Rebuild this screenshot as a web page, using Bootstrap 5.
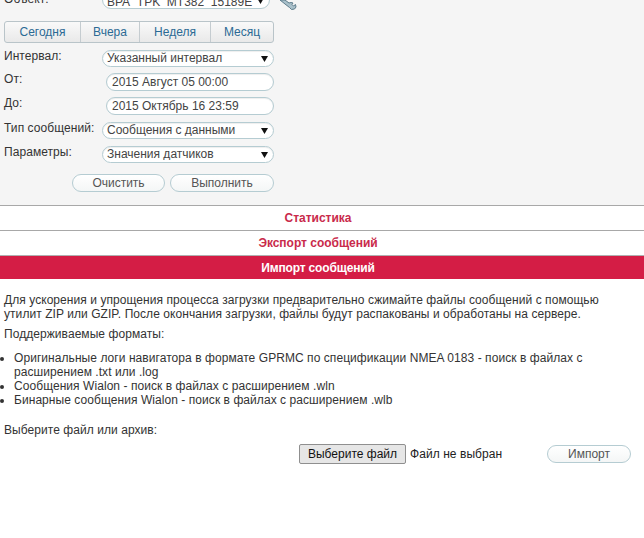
<!DOCTYPE html>
<html lang="ru">
<head>
<meta charset="utf-8">
<title>Импорт сообщений</title>
<link href="https://cdn.jsdelivr.net/npm/bootstrap@5.3.0/dist/css/bootstrap.min.css" rel="stylesheet">
<style>
html,body{height:538px;overflow:hidden}
body{font:12px/14px "Liberation Sans",Arial,sans-serif;color:#333;background:#fff;letter-spacing:.06px}
.query-panel{background:#f5f5f5;margin-top:-12px;height:217px;padding:0 370px 0 4px;width:644px}
.field-row{display:flex;align-items:flex-start;height:24px}
.field-label{width:98px;flex:none;margin-top:-1px}
.label-high{margin-top:-2px}
.pill-select.form-select,.pill-input.form-control{font-size:12px;line-height:14px;color:#444;border:1px solid #b5ccd2;box-shadow:inset 0 1px 1px #eee;padding:0 16px 0 4px;background-color:#fff}
.pill-select.form-select{width:172px;height:17px;min-height:17px;padding-bottom:2px;border-radius:9px;background-position:right 5px center;background-size:7px 7px;background-image:url("data:image/svg+xml,%3Csvg xmlns='http://www.w3.org/2000/svg' viewBox='0 0 8 8'%3E%3Cpath d='M0 1h8L4 8z' fill='%23111'/%3E%3C/svg%3E")}
.pill-input.form-control{width:168px;height:18px;min-height:18px;border-radius:9px;margin:-1px 0 0 4px;padding-left:5px}
.object-row{height:21px}
.object-row .field-label{margin-top:4px}
.object-row .pill-select.form-select{margin-top:3px;height:18px;min-height:18px;padding-top:3px;padding-bottom:0}
.wrench{margin:12px 0 0 10px;flex:none}
.range-group{display:flex;width:270px;height:22px;margin:12px 0 7px;border:1px solid #b9c4c9;border-radius:3px;background:linear-gradient(#f9f9f9,#e9e9e9)}
.range-group .btn{height:20px;padding:0;font-size:12px;line-height:20px;color:#2b6a94;border:0;border-right:1px solid #c5ccd0;border-radius:0;background:transparent}
.range-group .btn:last-child{border-right:0}
.seg-a{width:76px}.seg-b{width:59px}.seg-c{width:71px}.seg-d{width:62px}
.pill-btn.btn{height:18px;padding:0;font-size:12px;line-height:16px;color:#555;background:linear-gradient(#fff,#f4f6f6);border:1px solid #b5ccd2;border-radius:9px}
.action-row{display:flex;justify-content:flex-end;gap:5px;margin-top:0;width:270px}
.clear-btn{width:93px}.run-btn{width:104px}.import-btn{width:84px}
.section-bar{height:25px;border-top:1px solid #a8a8a8;text-align:center;font-weight:700;font-size:12px;line-height:25px;color:#c92a4b;background:#fff;padding-right:8px;letter-spacing:-.02px}
.section-bar.active-bar{height:24px;background:#d41d45;color:#fff;line-height:24px;border-top-color:#b0b0b0;letter-spacing:-.15px}
.import-body{padding:14px 4px 0}
.import-body p{margin:0 0 6px;color:#333}
.lead-text{width:600px}
.import-body ul{margin:10px 0 0;padding-left:10px;width:610px}
.pick-label{margin-top:16px}
.pick-row{display:flex;align-items:center;height:20px;margin-top:7px;padding-left:295px}
.choose-btn.btn{width:107px;height:20px;padding:0;font-size:12px;line-height:18px;color:#111;background:#e6e6e6;border:1px solid #8f8f8f;border-radius:2px}
.no-file{margin-left:4px;width:137px;color:#222}
</style>
</head>
<body>
<form class="query-panel">
  <div class="field-row object-row">
    <span class="field-label">Объект:</span>
    <select class="form-select pill-select"><option>BPA_TPK_MT382_15189E</option></select>
    <svg class="wrench" width="17" height="11" viewBox="0 0 17 11" aria-hidden="true"><path d="M0 0 H5 L9 3 L11 2.5 L13 3 L12 4.5 L13.5 6 L15.5 4.5 L16 7 L14.5 9 L11.5 9.5 L9.5 7.5 L5 4 Z" fill="#a9c0ca" stroke="#5f7d8c" stroke-width="1"/></svg>
  </div>
  <div class="range-group">
    <button type="button" class="btn seg-a">Сегодня</button>
    <button type="button" class="btn seg-b">Вчера</button>
    <button type="button" class="btn seg-c">Неделя</button>
    <button type="button" class="btn seg-d">Месяц</button>
  </div>
  <div class="field-row">
    <span class="field-label">Интервал:</span>
    <select class="form-select pill-select"><option>Указанный интервал</option></select>
  </div>
  <div class="field-row">
    <span class="field-label label-high">От:</span>
    <input class="form-control pill-input" value="2015 Август 05 00:00">
  </div>
  <div class="field-row">
    <span class="field-label label-high">До:</span>
    <input class="form-control pill-input" value="2015 Октябрь 16 23:59">
  </div>
  <div class="field-row">
    <span class="field-label">Тип сообщений:</span>
    <select class="form-select pill-select"><option>Сообщения с данными</option></select>
  </div>
  <div class="field-row">
    <span class="field-label">Параметры:</span>
    <select class="form-select pill-select"><option>Значения датчиков</option></select>
  </div>
  <div class="action-row mt-1">
    <button type="button" class="btn pill-btn clear-btn">Очистить</button>
    <button type="button" class="btn pill-btn run-btn">Выполнить</button>
  </div>
</form>
<div class="section-bar">Статистика</div>
<div class="section-bar">Экспорт сообщений</div>
<div class="section-bar active-bar">Импорт сообщений</div>
<div class="import-body">
  <p class="lead-text">Для ускорения и упрощения процесса загрузки предварительно сжимайте файлы сообщений с помощью утилит ZIP или GZIP. После окончания загрузки, файлы будут распакованы и обработаны на сервере.</p>
  <p>Поддерживаемые форматы:</p>
  <ul>
    <li>Оригинальные логи навигатора в формате GPRMC по спецификации NMEA 0183 - поиск в файлах с расширением .txt или .log</li>
    <li>Сообщения Wialon - поиск в файлах с расширением .wln</li>
    <li>Бинарные сообщения Wialon - поиск в файлах с расширением .wlb</li>
  </ul>
  <div class="pick-label">Выберите файл или архив:</div>
  <div class="pick-row">
    <button type="button" class="btn choose-btn">Выберите файл</button>
    <span class="no-file">Файл не выбран</span>
    <button type="button" class="btn pill-btn import-btn">Импорт</button>
  </div>
</div>
<script src="https://cdn.jsdelivr.net/npm/bootstrap@5.3.0/dist/js/bootstrap.bundle.min.js"></script>
</body>
</html>
